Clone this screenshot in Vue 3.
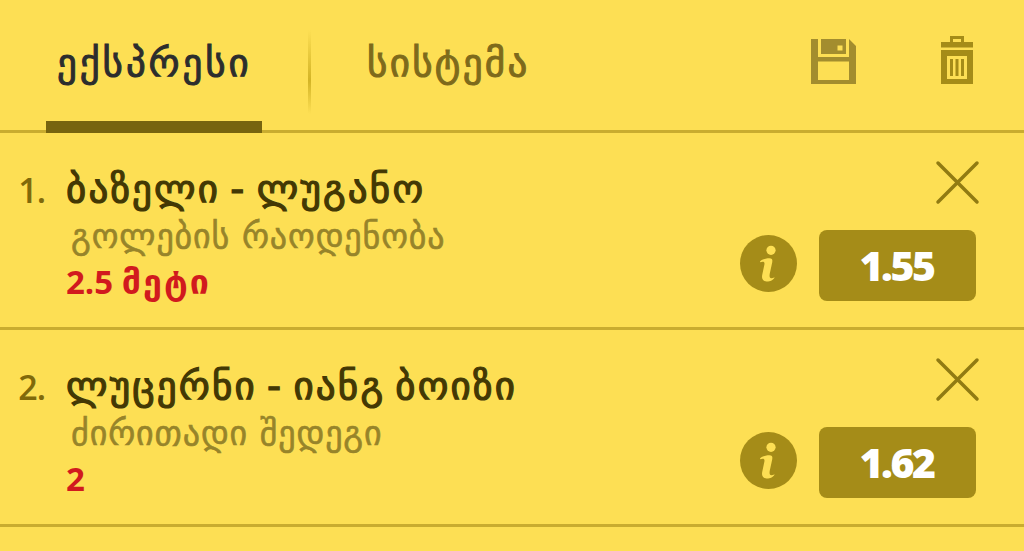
<script setup>
import { ref } from 'vue'

const activeTab = ref('express')

const tabs = [
  { id: 'express', label: 'ექსპრესი' },
  { id: 'system', label: 'სისტემა' }
]

const bets = ref([
  { id: 1, match: 'ბაზელი - ლუგანო', market: 'გოლების რაოდენობა', pick: '2.5', pickWord: 'მეტი', odds: '1.55' },
  { id: 2, match: 'ლუცერნი - იანგ ბოიზი', market: 'ძირითადი შედეგი', pick: '2', pickWord: '', odds: '1.62' }
])

const removeBet = (id) => {
  bets.value = bets.value.filter((bet) => bet.id !== id)
}
</script>

<template>
  <div class="betslip">
    <header class="header">
      <nav class="tabs">
        <button
          v-for="tab in tabs"
          :key="tab.id"
          class="tab"
          :class="[tab.id, { active: activeTab === tab.id }]"
          @click="activeTab = tab.id"
        >
          <span class="tab-label">{{ tab.label }}</span>
        </button>
      </nav>
      <div class="tools">
        <svg class="save" width="45" height="45" viewBox="0 0 45 45">
          <path d="M0 0H7V41H38V0L45 7V45H0Z" />
          <path fill-rule="evenodd" d="M10 0H35V15H10ZM26.500 6.500V11.500H31.500V6.500Z" />
          <path d="M7 18H38V22.500H7Z" />
        </svg>
        <svg class="trash" width="32" height="48" viewBox="0 0 32 48">
          <path fill-rule="evenodd" d="M0 6H9V0H23V6H32V11.500H0ZM12 3V6H20V3Z" />
          <path fill-rule="evenodd" d="M0 14H32V48H0ZM6 20V43H26V20Z" />
          <path d="M9 23H12V40H9ZM14.500 23H17.500V40H14.500ZM20 23H23V40H20Z" />
        </svg>
      </div>
    </header>

    <section v-for="(bet, index) in bets" :key="bet.id" class="bet">
      <div class="num">{{ index + 1 }}.</div>
      <div class="info">
        <div class="match">{{ bet.match }}</div>
        <div class="market">{{ bet.market }}</div>
        <div class="pick">{{ bet.pick }} <span class="word">{{ bet.pickWord }}</span></div>
      </div>
      <div class="side">
        <svg class="close" width="45" height="45" viewBox="0 0 45 45" @click="removeBet(bet.id)">
          <path d="M3 3L42 42M42 3L3 42" />
        </svg>
        <div class="actions">
          <svg class="details" width="57" height="57" viewBox="0 0 57 57">
            <circle cx="28.500" cy="28.500" r="28.500" />
            <circle class="mark" cx="31" cy="15.300" r="4.600" />
            <path class="mark" d="M20 26.200C22 24.200 26 23.200 29.500 23.200C32.500 23.200 32.600 25 32.200 27.500L29.800 38.500C29.200 41.700 29.700 43.200 31.300 43.200C32.400 43.200 33.500 42.700 34.600 42.200C33.800 45 29.500 46.700 26.500 46.500C22.500 46.200 21.600 43.500 22.200 40L24.400 29.500C24.900 26.800 23.300 26.100 20.300 27.300Z" />
          </svg>
          <div class="odds">{{ bet.odds }}</div>
        </div>
      </div>
    </section>
  </div>
</template>

<style>
html,
body {
  background: #fddf54;
  overflow: hidden;
}
</style>

<style scoped>
.betslip {
  width: 1024px;
  height: 551px;
  background: #fddf54;
  font-family: 'Open Sans', 'DejaVu Sans', sans-serif;
  overflow: hidden;
}

.header {
  display: flex;
  justify-content: space-between;
  box-sizing: border-box;
  height: 133px;
  border-bottom: 3px solid #c9ac2f;
}

.tabs {
  display: flex;
  padding-left: 46px;
}

.tab {
  display: flex;
  align-items: flex-start;
  box-sizing: border-box;
  height: 133px;
  padding: 41px 0 0;
  border: 0;
  background: none;
  font: 400 39px/44px 'DejaVu Sans', sans-serif;
  letter-spacing: 2.3px;
  color: #7e6a1b;
  white-space: nowrap;
  -webkit-text-stroke: 1px currentColor;
}

.tab.express {
  width: 216px;
  padding-left: 11px;
  letter-spacing: 2.9px;
}

.tab.system {
  width: 330px;
  padding-left: 105px;
  background: linear-gradient(rgba(211, 180, 38, 0), #d3b426 60%, rgba(211, 180, 38, 0)) 46px 30px / 3px 84px no-repeat;
}

.tab.active {
  border-bottom: 12px solid #77640f;
  color: #2c2d2d;
}

.tools {
  display: flex;
  align-items: flex-start;
  gap: 85px;
  padding: 36px 51px 0 0;
}

.save {
  margin-top: 3px;
  fill: #a38d2e;
}

.trash {
  fill: #a58c18;
}

.bet {
  display: flex;
  box-sizing: border-box;
  height: 197px;
  border-bottom: 3px solid #c9ac2f;
}

.num {
  box-sizing: border-box;
  width: 66px;
  padding: 34px 21px 0 0;
  text-align: right;
  font-size: 34px;
  line-height: 46px;
  font-weight: 600;
  letter-spacing: -1px;
  color: #80690a;
}

.info {
  flex: 1;
  padding-top: 32px;
  white-space: nowrap;
}

.match {
  height: 48px;
  font: 400 39px/48px 'DejaVu Sans', sans-serif;
  letter-spacing: 2.2px;
  word-spacing: -4.5px;
  color: #433804;
  -webkit-text-stroke: 1.2px currentColor;
}

.market {
  height: 46px;
  padding-left: 5px;
  font: 400 34px/46px 'DejaVu Sans', sans-serif;
  letter-spacing: 0.9px;
  color: #97842a;
  -webkit-text-stroke: 0.6px currentColor;
}

.pick {
  height: 46px;
  font-size: 33px;
  line-height: 46px;
  font-weight: 700;
  color: #d11a1e;
}

.word {
  font: 700 34px/40px 'DejaVu Sans', sans-serif;
  letter-spacing: 2px;
}

.side {
  display: flex;
  flex-direction: column;
  align-items: flex-end;
  padding: 27px 48px 0 0;
}

.close {
  margin-right: -4px;
  fill: none;
  stroke: #917b12;
  stroke-width: 3.5;
  stroke-linecap: round;
}

.actions {
  display: flex;
  align-items: center;
  gap: 22px;
  margin-top: 24.500px;
}

.details {
  margin-top: -3px;
  fill: #a58c18;
}

.mark {
  fill: #fddf54;
}

.odds {
  box-sizing: border-box;
  width: 157px;
  height: 71px;
  padding-right: 2px;
  border-radius: 8px;
  background: #a58c18;
  text-align: center;
  font: 800 41px/70px 'Open Sans', sans-serif;
  letter-spacing: -2.5px;
  color: #fff;
}
</style>
